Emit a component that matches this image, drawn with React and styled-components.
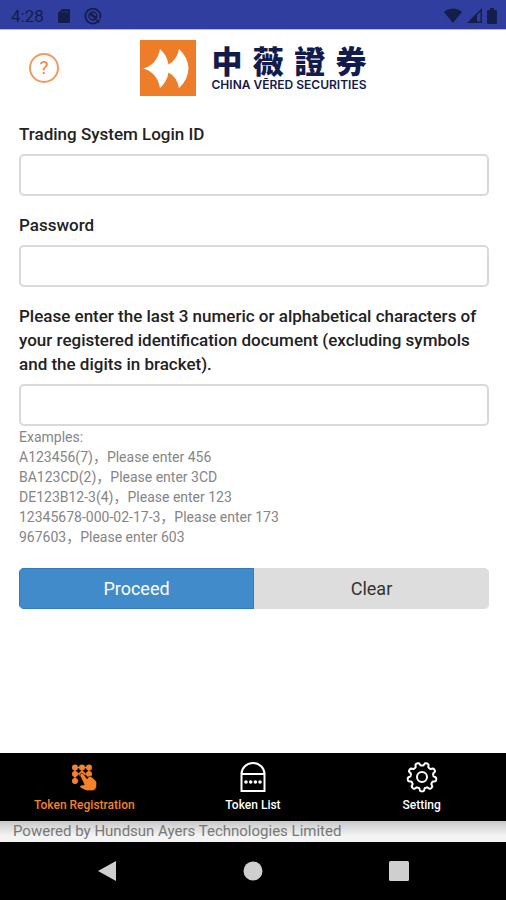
import React, { useState } from 'react';
import styled, { createGlobalStyle } from 'styled-components';

const examples = [
  'A123456(7)，Please enter 456',
  'BA123CD(2)，Please enter 3CD',
  'DE123B12-3(4)，Please enter 123',
  '12345678-000-02-17-3，Please enter 173',
  '967603，Please enter 603',
];

// outline of a gear with nine rounded teeth, one of them pointing down
const gearPoints = Array.from({ length: 180 }, (_, i) => {
  const angle = (i * Math.PI) / 90;
  const radius = 12.9 + 1.5 * Math.tanh(2.4 * Math.cos(9 * (angle - Math.PI / 2)));
  return `${(16 + radius * Math.cos(angle)).toFixed(2)},${(16 + radius * Math.sin(angle)).toFixed(2)}`;
}).join(' ');

const SdCardIcon = () => (
  <svg width="14" height="16" viewBox="0 0 14 16" aria-hidden="true">
    <path fill="currentColor" d="M5 1h7a1 1 0 0 1 1 1v12a1 1 0 0 1-1 1H2a1 1 0 0 1-1-1V5z" />
    <path stroke="#232d72" strokeWidth="1" d="M5.500 3v2M8 3v2M10.500 3v2" />
  </svg>
);

const SyncIcon = () => (
  <svg width="18" height="18" viewBox="0 0 18 18" fill="none" stroke="currentColor" aria-hidden="true">
    <path strokeWidth="1.800" d="M13.500 15A7.500 7.500 0 1 1 16 11.500" />
    <circle cx="9" cy="9" r="4" strokeWidth="1.400" />
    <path strokeWidth="2.800" d="M6.500 6.500l5.500 5" />
    <path fill="currentColor" stroke="none" d="M11.500 12.500h5l-2 4z" />
  </svg>
);

const WifiIcon = () => (
  <svg width="18" height="15" viewBox="0 0 18 15" aria-hidden="true">
    <path fill="currentColor" d="M9 15L0 4Q4 .5 9 .5T18 4z" />
  </svg>
);

const SignalIcon = () => (
  <svg width="15" height="15" viewBox="0 0 15 15" aria-hidden="true">
    <path fill="none" stroke="currentColor" strokeWidth="1.500" d="M1.800 14.200H14.200V1.800z" />
    <path fill="currentColor" d="M1 15L10 6v9z" />
  </svg>
);

const BatteryIcon = () => (
  <svg width="10" height="16" viewBox="0 0 10 16" aria-hidden="true">
    <path fill="currentColor" d="M3 0h4v2h2a1 1 0 0 1 1 1v12a1 1 0 0 1-1 1H1a1 1 0 0 1-1-1V3a1 1 0 0 1 1-1h2z" />
  </svg>
);

const LogoMark = () => (
  <svg width="56" height="56" viewBox="0 0 56 56" aria-hidden="true">
    <rect width="56" height="56" fill="#ee7d29" />
    <path
      fill="#fff"
      d="M3 28.500Q17 25 20 9Q27 15 28.500 24.500Q37 20 39 9Q48 17 48.500 28.500Q48 40 39 48Q37 37 28.500 32.500Q27 42 20 48Q17 32 3 28.500z"
    />
  </svg>
);

const KeypadIcon = () => (
  <svg width="26" height="28" viewBox="0 0 26 28" fill="currentColor" aria-hidden="true">
    {[4, 11, 18].map((x) => [4.5, 11].map((y) => <circle key={`${x}-${y}`} cx={x} cy={y} r="3" />))}
    <circle cx="4" cy="18" r="3" />
    <path d="M4 3.800h14v1.400H4zM4 10.300h14v1.400H4zM3.300 4h1.400v14H3.300zM10.300 4h1.400v7h-1.400zM17.300 4h1.400v7h-1.400z" />
    <path
      stroke="#000"
      strokeWidth=".6"
      d="M9.300 10.800q1.700-1.500 3.100.3l3.700 4.700 1.500-2.100q1.600-1.200 3 .2l4 3.600q1.200 1.200 1.100 3l-.2 3.300q-.6 3.800-4.200 3.900h-4.800q-2-.1-3.700-1.100l-3.600-2q-1.200-1.600.8-2.400l3.300-.5-4.100-8.600q-.5-1.300.1-2.300z"
    />
  </svg>
);

const TokenListIcon = () => (
  <svg width="26" height="32" viewBox="0 0 26 32" fill="none" stroke="currentColor" strokeWidth="2" aria-hidden="true">
    <path d="M1.500 30V13A11.500 11 0 0 1 24.500 13V30z" />
    <path d="M1.500 13h23" />
    <g fill="currentColor" stroke="none">
      <circle cx="6" cy="21" r="1.800" />
      <circle cx="10.700" cy="21" r="1.800" />
      <circle cx="15.400" cy="21" r="1.800" />
      <circle cx="20" cy="21" r="1.800" />
    </g>
  </svg>
);

const GearIcon = () => (
  <svg width="32" height="32" viewBox="0 0 32 32" fill="none" stroke="currentColor" strokeWidth="2" strokeLinejoin="round" aria-hidden="true">
    <polygon points={gearPoints} />
    <circle cx="16" cy="16" r="5" />
  </svg>
);

const tabs = [
  { label: 'Token Registration', Icon: KeypadIcon },
  { label: 'Token List', Icon: TokenListIcon },
  { label: 'Setting', Icon: GearIcon },
];

const App = () => {
  const [form, setForm] = useState({ loginId: '', password: '', document: '' });
  const [activeTab, setActiveTab] = useState('Token Registration');

  const handleChange = (e) => {
    setForm({ ...form, [e.target.name]: e.target.value });
  };

  const handleClear = () => {
    setForm({ loginId: '', password: '', document: '' });
  };

  return (
    <Screen>
      <GlobalStyle />
      <StatusBar>
        <StatusGroup $gap="13px">
          <Clock>4:28</Clock>
          <SdCardIcon />
          <SyncIcon />
        </StatusGroup>
        <StatusGroup $gap="5px">
          <WifiIcon />
          <SignalIcon />
          <BatteryIcon />
        </StatusGroup>
      </StatusBar>

      <Header>
        <HelpButton type="button">?</HelpButton>
        <Brand>
          <LogoMark />
          <BrandText>
            <BrandName lang="zh-Hant">
              <span>中</span>
              <span>薇</span>
              <span>證</span>
              <span>券</span>
            </BrandName>
            <BrandLatin>CHINA VĒRED SECURITIES</BrandLatin>
          </BrandText>
        </Brand>
      </Header>

      <Form onSubmit={(e) => e.preventDefault()}>
        <Field>
          <Label htmlFor="loginId">Trading System Login ID</Label>
          <Input id="loginId" name="loginId" value={form.loginId} onChange={handleChange} />
        </Field>
        <Field>
          <Label htmlFor="password">Password</Label>
          <Input id="password" name="password" type="password" value={form.password} onChange={handleChange} />
        </Field>
        <Field>
          <Label htmlFor="document">
            Please enter the last 3 numeric or alphabetical characters of your registered
            identification document (excluding symbols and the digits in bracket).
          </Label>
          <Input id="document" name="document" value={form.document} onChange={handleChange} />
        </Field>
        <Examples>
          <p>Examples:</p>
          {examples.map((example) => (
            <p key={example}>{example}</p>
          ))}
        </Examples>
        <Actions>
          <ActionButton type="submit" $primary>Proceed</ActionButton>
          <ActionButton type="button" onClick={handleClear}>Clear</ActionButton>
        </Actions>
      </Form>

      <TabBar>
        {tabs.map(({ label, Icon }) => (
          <Tab key={label} type="button" $active={label === activeTab} onClick={() => setActiveTab(label)}>
            <IconSlot>
              <Icon />
            </IconSlot>
            {label}
          </Tab>
        ))}
      </TabBar>
      <Powered>Powered by Hundsun Ayers Technologies Limited</Powered>
      <SystemBar>
        <SystemButton type="button" aria-label="Back">
          <svg width="20" height="22" viewBox="0 0 20 22">
            <path fill="currentColor" d="M1 11L19 1v20z" />
          </svg>
        </SystemButton>
        <SystemButton type="button" aria-label="Home">
          <svg width="20" height="20" viewBox="0 0 20 20">
            <circle cx="10" cy="10" r="9.500" fill="currentColor" />
          </svg>
        </SystemButton>
        <SystemButton type="button" aria-label="Recent apps">
          <svg width="20" height="20" viewBox="0 0 20 20">
            <rect width="20" height="20" rx="1.500" fill="currentColor" />
          </svg>
        </SystemButton>
      </SystemBar>
    </Screen>
  );
};

const GlobalStyle = createGlobalStyle`
  * {
    box-sizing: border-box;
  }

  body {
    margin: 0;
    background-color: #fff;
    font-family: Roboto, 'Noto Sans CJK SC', sans-serif;
  }

  button, input {
    font-family: inherit;
  }
`;

const Screen = styled.div`
  min-height: 100vh;
  display: flex;
  flex-direction: column;
`;

const StatusBar = styled.div`
  display: flex;
  justify-content: space-between;
  align-items: center;
  height: 30px;
  padding: 2px 9px 0 11px;
  background-color: #303f9f;
  border-bottom: 1px solid #b4b9e0;
  color: #151d4a;
`;

const StatusGroup = styled.div`
  display: flex;
  align-items: center;
  gap: ${({ $gap }) => $gap};
`;

const Clock = styled.span`
  font-size: 17px;
`;

const Header = styled.header`
  display: grid;
  grid-template-columns: 1fr auto 1fr;
  align-items: center;
  padding: 10px 29px 9px;
`;

const HelpButton = styled.button`
  width: 30px;
  height: 30px;
  padding: 0;
  border: 2px solid #f19a62;
  border-radius: 50%;
  background: none;
  color: #ef8240;
  font-size: 19px;
  line-height: 24px;
`;

const Brand = styled.div`
  display: flex;
  align-items: center;
  gap: 16px;
`;

const BrandText = styled.div`
  color: #131a4c;
`;

const BrandName = styled.div`
  display: flex;
  justify-content: space-between;
  font-family: 'Noto Sans CJK TC', sans-serif;
  font-size: 31px;
  font-weight: 900;
  line-height: 32px;
`;

const BrandLatin = styled.div`
  margin-top: 2px;
  font-family: Inter, sans-serif;
  font-size: 12px;
  font-weight: 600;
  line-height: 14px;
  white-space: nowrap;
`;

const Form = styled.form`
  flex: 1;
  display: flex;
  flex-direction: column;
  padding: 17px 17px 24px 19px;
`;

const Field = styled.div`
  display: flex;
  flex-direction: column;
  gap: 8px;

  & + & {
    margin-top: 17px;
  }
`;

const Label = styled.label`
  color: #222;
  font-size: 17px;
  font-weight: 500;
  line-height: 24px;
`;

const Input = styled.input`
  width: 100%;
  height: 42px;
  padding: 0 12px;
  border: 2px solid #d9d9d9;
  border-radius: 5px;
  background-color: #fff;
  font-size: 16px;
`;

const Examples = styled.div`
  margin-top: 1px;
  color: #858585;
  font-size: 14px;
  line-height: 20px;

  p {
    margin: 0;
  }
`;

const Actions = styled.div`
  display: flex;
  margin-top: 21px;
  border-radius: 5px;
  overflow: hidden;
`;

const ActionButton = styled.button`
  flex: 1;
  height: 41px;
  border: 1px solid ${({ $primary }) => ($primary ? '#2f7cbe' : '#dddddd')};
  background-color: ${({ $primary }) => ($primary ? '#428bca' : '#dddddd')};
  color: ${({ $primary }) => ($primary ? '#fff' : '#333')};
  font-size: 18px;
`;

const TabBar = styled.nav`
  display: grid;
  grid-template-columns: repeat(3, 1fr);
  height: 68px;
  background-color: #000;
`;

const Tab = styled.button`
  display: flex;
  flex-direction: column;
  align-items: center;
  gap: 4px;
  padding: 8px 0 0;
  border: none;
  background: none;
  color: ${({ $active }) => ($active ? '#f5822a' : '#fff')};
  font-size: 12px;
  font-weight: 500;
  line-height: 16px;
`;

const IconSlot = styled.span`
  display: flex;
  align-items: center;
  justify-content: center;
  height: 32px;
`;

const Powered = styled.div`
  padding-left: 13px;
  background: linear-gradient(#c8c8c8, #f4f4f4 70%);
  color: #777;
  font-size: 15px;
  line-height: 21px;
`;

const SystemBar = styled.div`
  display: flex;
  justify-content: center;
  align-items: center;
  gap: 126px;
  height: 58px;
  background-color: #000;
`;

const SystemButton = styled.button`
  display: flex;
  padding: 0;
  border: none;
  background: none;
  color: #cfcfcf;
`;

export default App;
